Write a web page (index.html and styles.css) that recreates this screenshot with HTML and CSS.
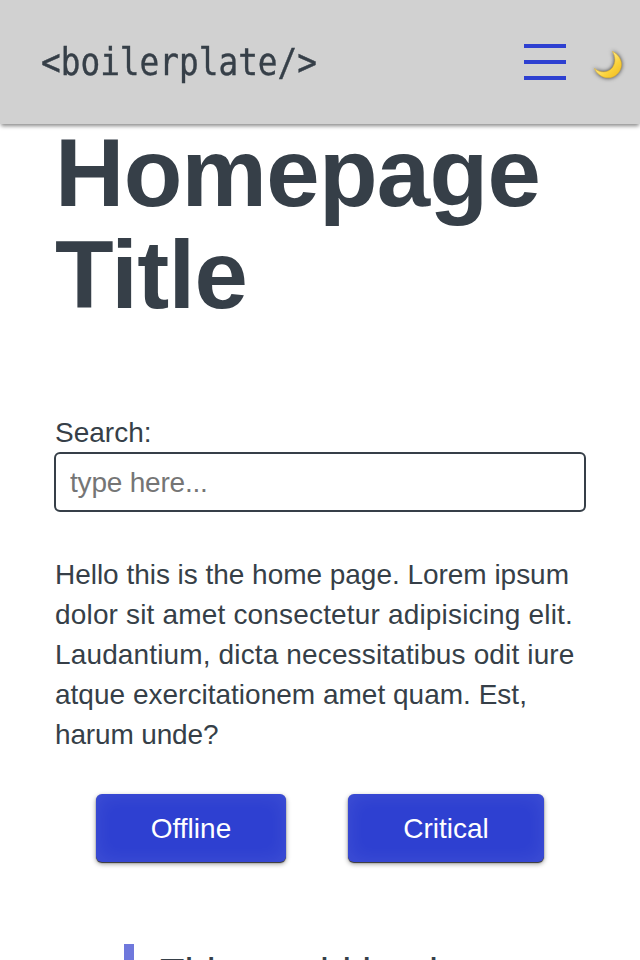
FILE: index.html
```html
<!DOCTYPE html>
<html lang="en">
<head>
<meta charset="utf-8">
<title>Homepage</title>
<link rel="stylesheet" href="styles.css">
</head>
<body>
<header class="header">
  <a class="logo">&lt;boilerplate/&gt;</a>
  <div class="menu"><span></span><span></span><span></span></div>
  <svg class="moon" viewBox="0 0 40 40">
    <defs><linearGradient id="gold" x1="0" y1="0" x2="1" y2="1"><stop offset="0.4" stop-color="#ffe778"/><stop offset="0.65" stop-color="#fbd23a"/><stop offset="1" stop-color="#eeb91f"/></linearGradient></defs>
    <path d="M22.5 6.5C33 11.5 34.5 24 25.5 30.500C18.500 35.500 8 32 4.500 23.500C10 28.500 18.500 28 22.500 22.500C26 17.500 25.500 11.500 22.500 6.500Z" fill="url(#gold)" stroke="#e5b52b" stroke-width=".6"/>
  </svg>
</header>
<main class="content">
  <h1>Homepage Title</h1>
  <label class="label" for="search">Search:</label>
  <input class="search" id="search" placeholder="type here...">
  <p class="copy"><span class="l1">Hello this is the home page. Lorem ipsum</span><br><span class="l2">dolor sit amet consectetur adipisicing elit.</span><br><span class="l3">Laudantium, dicta necessitatibus odit iure</span><br><span class="l4">atque exercitationem amet quam. Est,</span><br><span class="l5">harum unde?</span></p>
  <div class="actions"><a class="button offline">Offline</a><a class="button critical">Critical</a></div>
  <blockquote>This would be the</blockquote>
</main>
</body>
</html>
```
FILE: styles.css
```css
* { box-sizing: border-box; }
html, body { height: 100%; overflow: hidden; }
body { margin: 0; background: #fff; color: #363f48; font: 28px/40px "Liberation Sans", Arial, sans-serif; }
.header { position: relative; z-index: 1; display: flex; align-items: center; height: 124px; padding-left: 41px; background: #d1d1d1; box-shadow: 0 3px 4px -1px #888; }
.logo { width: 483px; padding-top: 2px; font: 37px/50px "DejaVu Sans Mono", monospace; transform: scaleX(.885); transform-origin: left; white-space: nowrap; -webkit-text-stroke: .4px #363f48; }
.menu { display: flex; flex-direction: column; gap: 12px; width: 42px; }
.menu span { height: 4px; background: #2e40d1; }
.moon { width: 40px; height: 40px; margin: 5px 0 0 24px; filter: drop-shadow(0 0 2px #333); }
.content { padding: 0 54px; }
h1 { margin: -3px 0 0; height: 288px; padding: 1px 0 0 1px; font-size: 96px; line-height: 102px; font-weight: 700; letter-spacing: -.7px; }
.label { display: block; height: 43px; padding: 4px 0 0 1px; }
.search { display: block; width: 532px; height: 60px; padding: 2px 14px 0; border: 2px solid #363f48; border-radius: 6px; background: #fff; font: inherit; letter-spacing: -.2px; }
.search::placeholder { color: #757575; opacity: 1; }
.copy { margin: 43px -20px 0 1px; white-space: nowrap; }
.l1 { letter-spacing: -.03px; }
.l2 { letter-spacing: .17px; }
.l3 { letter-spacing: .14px; }
.l4 { letter-spacing: .01px; }
.l5 { letter-spacing: -.15px; }
.actions { display: flex; gap: 62px; margin: 39px 0 0 42px; }
.button { display: flex; align-items: center; justify-content: center; height: 68px; padding-top: 2px; border-radius: 6px; background: #2e40d1; color: #fff; box-shadow: inset 0 0 20px rgba(255,255,255,.09), 0 1px 1px #333, 0 2px 5px rgba(0,0,0,.4); }
.offline { width: 190px; }
.critical { width: 196px; }
blockquote { margin: 82px 70px 0; padding-left: 26px; border-left: 10px solid #6f78dc; font-size: 40px; line-height: 58px; height: 16px; white-space: nowrap; }
```
